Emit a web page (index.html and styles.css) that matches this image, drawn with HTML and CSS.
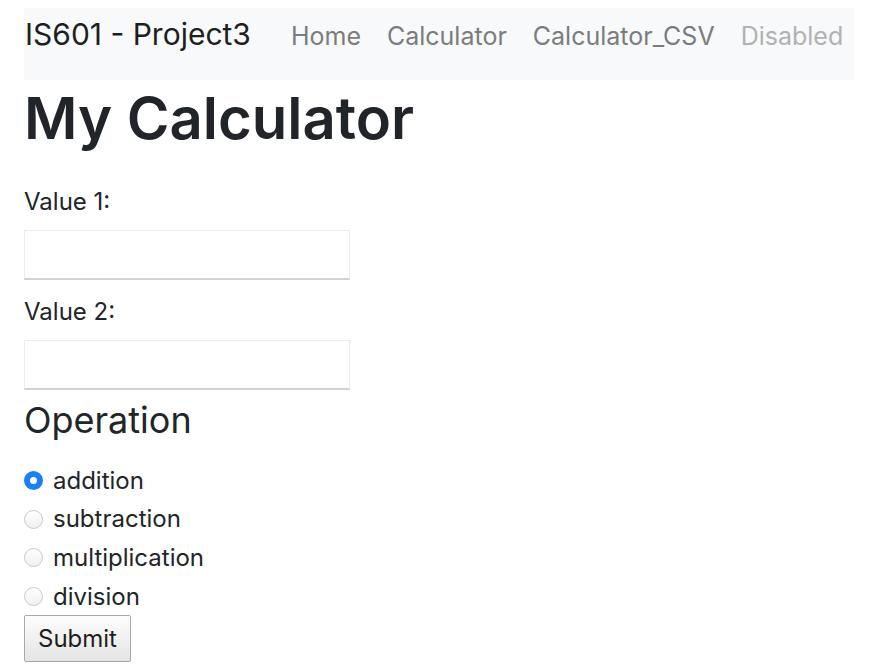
FILE: index.html
```html
<!DOCTYPE html>
<html lang="en">
<head>
<meta charset="utf-8">
<title>My Calculator</title>
<link rel="stylesheet" href="styles.css">
</head>
<body>
<div class="page">
  <nav class="navbar">
    <a class="brand" href="#">IS601 - Project3</a>
    <ul class="nav">
      <li><a class="nav-link" href="#">Home</a></li>
      <li><a class="nav-link" href="#">Calculator</a></li>
      <li><a class="nav-link" href="#">Calculator_CSV</a></li>
      <li><span class="nav-link disabled">Disabled</span></li>
    </ul>
  </nav>
  <h1 class="title">My Calculator</h1>
  <form class="calc">
    <label class="field-label" for="v1">Value 1:</label>
    <input class="field" id="v1" type="text">
    <label class="field-label" for="v2">Value 2:</label>
    <input class="field" id="v2" type="text">
    <fieldset class="ops">
      <legend class="ops-title">Operation</legend>
      <label class="radio-row"><span class="radio checked"></span>addition</label>
      <label class="radio-row"><span class="radio"></span>subtraction</label>
      <label class="radio-row"><span class="radio"></span>multiplication</label>
      <label class="radio-row"><span class="radio"></span>division</label>
    </fieldset>
    <button class="submit" type="button">Submit</button>
  </form>
</div>
</body>
</html>
```
FILE: styles.css
```css
* { box-sizing: border-box; }
html, body { margin: 0; padding: 0; background: #fff; }
body {
  font-family: Inter, "Liberation Sans", Arial, sans-serif;
  color: #212529;
  font-size: 24px;
}
.page { padding: 8px 19px 0 24px; }

.navbar {
  display: flex;
  align-items: baseline;
  height: 72px;
  padding-top: 8px;
  background: #f8f9fa;
  white-space: nowrap;
}
.brand {
  flex-shrink: 0;
  font-size: 30px;
  line-height: 1.2;
  color: #1d1f21;
  text-decoration: none;
  margin-left: 1px;
  margin-right: 27px;
}
.nav {
  display: flex;
  flex-shrink: 0;
  list-style: none;
  margin: 0;
  padding: 0;
}
.nav-link {
  display: block;
  padding: 0 13px;
  font-size: 25px;
  line-height: 1.5;
  color: #7b7c7d;
  text-decoration: none;
}
.nav-link.disabled { color: #b1b2b3; }

.title {
  margin: 2px 0 0 0;
  font-size: 58px;
  font-weight: 600;
  line-height: 72px;
  color: #212529;
}

.calc { display: flex; flex-direction: column; align-items: flex-start; margin-top: 30px; }
.field-label { display: block; line-height: 36px; margin-bottom: 10px; }
.field {
  width: 326px;
  height: 50px;
  margin: 0 0 14px 0;
  border: 1px solid #ececec;
  border-bottom: 2px solid #d2d2d2;
  background: #fff;
  font-size: 24px;
}
.ops { border: 0; margin: -11px 0 0 0; padding: 0; min-width: 0; }
.ops-title {
  padding: 0;
  font-size: 36px;
  line-height: 54px;
  margin-bottom: 14px;
}
.radio-row {
  display: flex;
  align-items: center;
  height: 38.6px;
  gap: 10px;
}
.radio {
  width: 19px;
  height: 19px;
  border-radius: 50%;
  border: 1px solid #c9c9c9;
  background: linear-gradient(#ffffff, #f0f0f0);
  margin-top: 1px;
}
.radio.checked {
  border: 6px solid #1a80fa;
  background: #fff;
}
.submit {
  margin-top: 0;
  width: 107px;
  height: 47px;
  padding: 0;
  font-family: Inter, "Liberation Sans", Arial, sans-serif;
  font-size: 24px;
  color: #1e1e1e;
  border: 1px solid #a8a8a8;
  border-radius: 2px;
  background: linear-gradient(#fdfdfd, #e4e4e4);
}
```
